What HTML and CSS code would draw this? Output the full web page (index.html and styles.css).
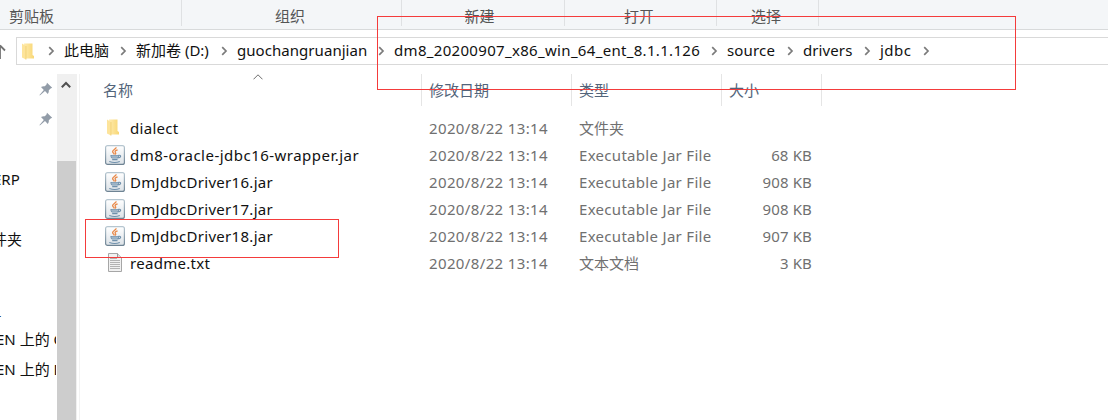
FILE: index.html
```html
<!DOCTYPE html>
<html lang="zh-CN">
<head>
<meta charset="utf-8">
<title>jdbc</title>
<link rel="stylesheet" href="styles.css">
</head>
<body>
<svg class="defs" width="0" height="0" aria-hidden="true">
  <defs>
    <linearGradient id="gold" x1="0" x2="1"><stop offset="0" stop-color="#ffebae"/><stop offset="1" stop-color="#f8d775"/></linearGradient>
    <linearGradient id="tile" x1="0" y1="0" x2="0" y2="1"><stop offset="0" stop-color="#fff"/><stop offset="1" stop-color="#dce2e7"/></linearGradient>
    <linearGradient id="edge" x1="0" y1="0" x2="0" y2="1"><stop offset="0" stop-color="#b6c6d0"/><stop offset="1" stop-color="#6f8494"/></linearGradient>
  </defs>
  <symbol id="folder" viewBox="0 0 12 17">
    <path d="M2 .5h8.500v11.500l1.500 1v2.500H3z" fill="url(#gold)"/>
    <path d="M0 .5l4 2.500v13.500L0 14.500z" fill="#fde49b"/>
    <path d="M4 3v13.500" stroke="#edca68" stroke-width=".7"/>
  </symbol>
  <symbol id="jar" viewBox="0 0 20 20">
    <rect x=".6" y=".6" width="18.800" height="18.800" rx="2" fill="url(#tile)" stroke="url(#edge)" stroke-width="1.200"/>
    <path d="M11 2.200c.6 1.800-4 2.900-3.400 4.700.3.900 1.600 1.400 1.500 2.600M12.600 4.800c-2 .6-3.100 1.400-2.200 2.600.6.700.3 1.400-.3 2" fill="none" stroke="#e98a4a" stroke-width="1.400"/>
    <path d="M5.500 10.500h8M6 10.500c0 1.200.4 2 1 2.300h5.600c.6-.5.900-1.300.9-2.300M7.200 14.600h5.300M4.300 16.500c3 1.100 8 1 10.500 0M13.500 10.300c3-.5 2.900 2.400-.8 2.700" fill="none" stroke="#6f90ab" stroke-width="1.200"/>
    <path d="M6.500 10.500h6.500l-.7 2.300H7.300z" fill="#9db4c7"/>
  </symbol>
  <symbol id="doc" viewBox="0 0 14 19">
    <path d="M.5.500h9l4 4v14H.5z" fill="#f1f1f1" stroke="#a6a6a6"/>
    <path d="M9.500.500v4h4" fill="#ddd" stroke="#999"/>
    <path d="M2 5.500h7M2 7.500h10M2 9.500h10M2 11.500h10M2 13.500h10M2 15.500h10" stroke="#b3b3b3"/>
  </symbol>
  <symbol id="chev" viewBox="0 0 7 10"><path d="M1.200 1.200L5 5 1.200 8.800" fill="none" stroke="#7b7b7b" stroke-width="1.700"/></symbol>
  <symbol id="pin" viewBox="0 0 14 14"><path d="M8 .8L13.200 5.800 11.600 6.500 9.800 8.300C10 9.800 9.600 11 8.800 11.900L6 9 .8 13.400.5 13 4.800 7.900 2 5.100C3.200 4.200 4.400 4 5.800 4.200L7.500 2.400z" fill="#929ca8"/></symbol>
</svg>

<div class="window">
  <div class="ribbon">
    <div class="group clip">剪贴板</div>
    <div class="group organize">组织</div>
    <div class="group create">新建</div>
    <div class="group open">打开</div>
    <div class="group select">选择</div>
  </div>

  <div class="address-row">
    <svg class="up" viewBox="0 0 6 16"><path d="M0 1v14M0 1.500l5 5" fill="none" stroke="#737373" stroke-width="1.800"/></svg>
    <div class="address">
      <svg class="folder"><use href="#folder"/></svg>
      <svg class="chev"><use href="#chev"/></svg>
      <span class="crumb pc">此电脑</span><svg class="chev"><use href="#chev"/></svg>
      <span class="crumb disk">新加卷 (D:)</span><svg class="chev"><use href="#chev"/></svg>
      <span class="crumb vendor">guochangruanjian</span><svg class="chev"><use href="#chev"/></svg>
      <span class="crumb release">dm8_20200907_x86_win_64_ent_8.1.1.126</span><svg class="chev"><use href="#chev"/></svg>
      <span class="crumb source">source</span><svg class="chev"><use href="#chev"/></svg>
      <span class="crumb drivers">drivers</span><svg class="chev"><use href="#chev"/></svg>
      <span class="crumb jdbc">jdbc</span><svg class="chev"><use href="#chev"/></svg>
    </div>
  </div>

  <div class="main">
    <nav class="tree">
      <div class="node pinned"><svg class="pin"><use href="#pin"/></svg></div>
      <div class="node pinned"><svg class="pin"><use href="#pin"/></svg></div>
      <div class="node"></div>
      <div class="node"><span class="erp">ERP</span></div>
      <div class="node"></div>
      <div class="node"><span class="files">件夹</span></div>
      <div class="node gap"></div>
      <div class="node"><span class="under">_</span></div>
      <div class="node"><span class="host">EN 上的 C</span></div>
      <div class="node"><span class="host">EN 上的 D</span></div>
    </nav>
    <div class="scroll">
      <svg class="scroll-up" viewBox="0 0 10 8"><path d="M.8 6.300L5 2l4.200 4.300" fill="none" stroke="#505050" stroke-width="2"/></svg>
      <div class="thumb"></div>
    </div>
    <section class="files-pane">
      <div class="row head">
        <div class="name">名称<svg class="sort" viewBox="0 0 10 6"><path d="M.5 5.300L5 .8l4.500 4.500" fill="none" stroke="#6d6d6d"/></svg></div>
        <div class="date">修改日期</div><div class="type">类型</div><div class="size">大小</div>
      </div>
      <div class="list">
        <div class="row"><div class="name"><span class="icon"><svg class="folder"><use href="#folder"/></svg></span>dialect</div><div class="date">2020/8/22 13:14</div><div class="type cn">文件夹</div><div class="size"></div></div>
        <div class="row"><div class="name wrapper"><span class="icon"><svg class="jar"><use href="#jar"/></svg></span>dm8-oracle-jdbc16-wrapper.jar</div><div class="date">2020/8/22 13:14</div><div class="type">Executable Jar File</div><div class="size">68 KB</div></div>
        <div class="row"><div class="name"><span class="icon"><svg class="jar"><use href="#jar"/></svg></span>DmJdbcDriver16.jar</div><div class="date">2020/8/22 13:14</div><div class="type">Executable Jar File</div><div class="size">908 KB</div></div>
        <div class="row"><div class="name"><span class="icon"><svg class="jar"><use href="#jar"/></svg></span>DmJdbcDriver17.jar</div><div class="date">2020/8/22 13:14</div><div class="type">Executable Jar File</div><div class="size">908 KB</div></div>
        <div class="row"><div class="name"><span class="icon"><svg class="jar"><use href="#jar"/></svg></span>DmJdbcDriver18.jar</div><div class="date">2020/8/22 13:14</div><div class="type">Executable Jar File</div><div class="size">907 KB</div></div>
        <div class="row"><div class="name readme"><span class="icon"><svg class="doc"><use href="#doc"/></svg></span>readme.txt</div><div class="date">2020/8/22 13:14</div><div class="type cn">文本文档</div><div class="size">3 KB</div></div>
      </div>
    </section>
  </div>
  <div class="mark mark-path"></div>
  <div class="mark mark-file"></div>
</div>
</body>
</html>
```

FILE: styles.css
```css
* { box-sizing: border-box; }
body { margin: 0; }
.defs { display: block; position: absolute; }
svg { flex: none; }

.window {
  position: relative;
  width: 1108px;
  height: 420px;
  overflow: hidden;
  display: flex;
  flex-direction: column;
  background: #fff;
  color: #111;
  font: 15px/20px "Noto Sans", "Noto Sans CJK SC", sans-serif;
  white-space: nowrap;
}

.ribbon {
  display: flex;
  height: 30px;
  background: #f4f6f8;
  border-bottom: 1px solid #d8dadb;
  color: #555;
}
.group {
  height: 26px;
  padding: 6px 3px 0 0;
  border-right: 1px solid #dfe1e3;
  text-align: center;
}
.clip { width: 182px; padding-left: 9px; text-align: left; }
.organize { width: 220px; }
.create { width: 163px; padding-right: 7px; }
.open { width: 152px; }
.select { width: 102px; }

.address-row { display: flex; height: 44px; padding-top: 7px; }
.up { width: 6px; height: 16px; margin: 7px 10px 0 0; }
.address {
  display: flex;
  align-items: center;
  flex: 1;
  height: 28px;
  padding-left: 5px;
  border: 1px solid #d9d9d9;
  border-right: 0;
}
.folder { width: 12px; height: 17px; }
.address .folder { margin-right: 14px; }
.chev { width: 7px; height: 10px; }
.crumb { margin: 0 11px 0 9px; padding-bottom: 2px; }
.pc { width: 45px; }
.disk { width: 74px; }
.vendor { width: 130px; letter-spacing: 0.05px; }
.release { width: 306px; letter-spacing: 0.32px; }
.source { width: 49px; letter-spacing: 0.15px; }
.drivers { width: 50px; letter-spacing: 0.1px; }
.jdbc { width: 32px; letter-spacing: 0.5px; }

.main { display: flex; flex: 1; min-height: 0; }
.tree { width: 57px; overflow: hidden; }
.node { display: flex; align-items: center; height: 30px; width: 56px; overflow: hidden; }
.gap { height: 40px; }
.pinned { padding-left: 39px; }
.pin { width: 14px; height: 14px; }
.erp { margin-left: -7px; }
.files { margin-left: -8px; }
.under { margin-left: -6px; }
.host { margin-left: -4px; }
.scroll { width: 20px; background: #f0f0f0; border-right: 1px solid #f0f0f0; }
.scroll-up { display: block; width: 10px; height: 8px; margin: 7px 0 72px 4px; }
.thumb { width: 19px; height: 270px; background: #cdcdcd; }

.files-pane { flex: 1; margin-left: 2px; border-left: 1px solid #f2f2f2; }
.row { display: grid; grid-template-columns: 342px 150px 150px 100px; height: 27px; align-items: center; color: #707070; }
.row .date, .row .type { padding-left: 7px; }
.row .name { display: flex; align-items: center; padding-left: 25px; color: #111; }
.icon { display: flex; justify-content: center; width: 20px; margin-right: 5px; }
.list .folder { margin-left: -4px; }
.jar { width: 20px; height: 20px; }
.doc { width: 14px; height: 19px; }
.list { padding-top: 8px; }
.list .name { letter-spacing: 0.3px; }
.list .wrapper { letter-spacing: 0.48px; }
.list .date { letter-spacing: 0.37px; }
.list .type { letter-spacing: 0.3px; }
.list .cn { letter-spacing: 0; }
.size { text-align: right; padding-right: 10px; }
.list .size { letter-spacing: 0.15px; }
.head { height: 32px; align-items: stretch; color: #52647a; }
.head > div { border-right: 1px solid #e5e5e5; line-height: 32px; }
.head .name { position: relative; padding-left: 23px; color: #52647a; }
.head .size { text-align: left; padding-left: 7px; }
.sort { position: absolute; left: 173px; top: 0; width: 10px; height: 6px; }

.mark { position: absolute; border: 1px solid #f43b3b; }
.mark-path { left: 377px; top: 16px; width: 639px; height: 74px; }
.mark-file { left: 85px; top: 219px; width: 254px; height: 39px; }
```
